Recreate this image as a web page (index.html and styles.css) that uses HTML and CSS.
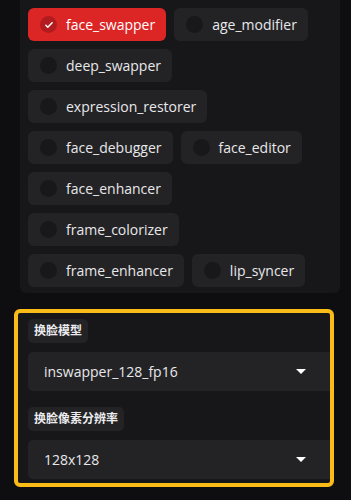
FILE: index.html
```html
<!DOCTYPE html>
<html lang="zh">
<head>
  <meta charset="UTF-8" />
  <meta name="viewport" content="width=device-width, initial-scale=1.0"/>
  <title>Processors</title>
  <link rel="stylesheet" href="styles.css">
</head>
<body>
  <section class="panel">
    <div class="chips">
      <label class="chip checked"><span class="dot"><svg viewBox="0 0 16 16" width="10" height="10"><path d="M3 8.5l3 3 7-7" fill="none" stroke="#fff" stroke-width="2.4" stroke-linecap="round" stroke-linejoin="round"/></svg></span>face_swapper</label>
      <label class="chip"><span class="dot"></span>age_modifier</label>
      <label class="chip"><span class="dot"></span>deep_swapper</label>
      <label class="chip"><span class="dot"></span>expression_restorer</label>
      <label class="chip"><span class="dot"></span>face_debugger</label>
      <label class="chip"><span class="dot"></span>face_editor</label>
      <label class="chip"><span class="dot"></span>face_enhancer</label>
      <label class="chip"><span class="dot"></span>frame_colorizer</label>
      <label class="chip"><span class="dot"></span>frame_enhancer</label>
      <label class="chip"><span class="dot"></span>lip_syncer</label>
    </div>
  </section>

  <section class="options">
    <div class="field">
      <span class="tag">换脸模型</span>
      <div class="select"><span>inswapper_128_fp16</span><i class="caret"></i></div>
    </div>
    <div class="field">
      <span class="tag">换脸像素分辨率</span>
      <div class="select"><span>128x128</span><i class="caret"></i></div>
    </div>
  </section>
</body>
</html>
```

FILE: styles.css
```css
:root {
  --bg: #0e0e10;
  --panel: #17171a;
  --chip: #232326;
  --dot: #18181b;
  --red: #dc2626;
  --red-dark: #b21c1f;
  --yellow: #fbbc18;
  --text: #e8e8ea;
}

* {
  margin: 0;
  padding: 0;
  box-sizing: border-box;
}

body {
  background: var(--bg);
  color: var(--text);
  font-family: 'Open Sans', 'Noto Sans CJK SC', sans-serif;
  width: 351px;
  height: 500px;
  overflow: hidden;
}

.panel {
  margin-left: 20px;
  width: 320px;
  background: var(--panel);
  border-radius: 0 0 6px 6px;
  padding: 8px 0 6px 8px;
}

.chips {
  display: flex;
  flex-wrap: wrap;
  gap: 8px;
  width: 298px;
}

.chip {
  display: flex;
  align-items: center;
  gap: 9px;
  height: 33px;
  padding: 0 11px 0 12px;
  background: var(--chip);
  border-radius: 6px;
  font-size: 14px;
  white-space: nowrap;
}

.dot {
  width: 17px;
  height: 17px;
  border-radius: 50%;
  background: var(--dot);
  display: flex;
  align-items: center;
  justify-content: center;
}

.chip.checked {
  background: var(--red);
  color: #fff;
}

.chip.checked .dot {
  background: var(--red-dark);
}

.options {
  margin: 16px 0 0 14px;
  width: 320px;
  height: 178px;
  border: 4px solid var(--yellow);
  border-radius: 6px;
  background: var(--panel);
  padding: 6px 0 0 10px;
  overflow: hidden;
  display: flex;
  flex-direction: column;
  gap: 16px;
}

.field {
  display: flex;
  flex-direction: column;
  align-items: flex-start;
  gap: 9px;
}

.tag {
  background: var(--chip);
  border-radius: 5px;
  padding: 0 6px;
  height: 24px;
  line-height: 24px;
  font-size: 12px;
  font-weight: bold;
  color: #ececee;
}

.select {
  width: 100%;
  height: 39px;
  background: var(--chip);
  border-radius: 5px 0 0 5px;
  display: flex;
  align-items: center;
  justify-content: space-between;
  padding: 0 24px 0 16px;
  font-size: 14px;
}

.caret {
  width: 0;
  height: 0;
  border-left: 5px solid transparent;
  border-right: 5px solid transparent;
  border-top: 5px solid #fff;
}
```
